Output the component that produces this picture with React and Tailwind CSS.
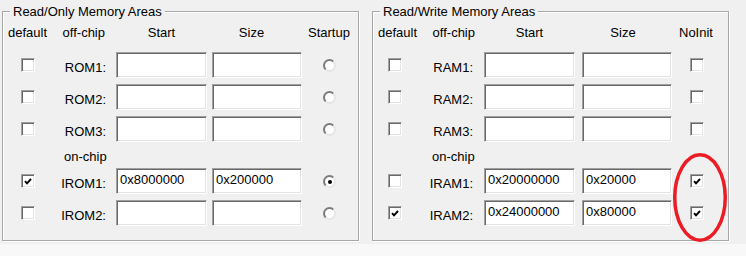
const romRows = [
  { label: "ROM1:" },
  { label: "ROM2:" },
  { label: "ROM3:" },
];
const iromRows = [
  { label: "IROM1:", start: "0x8000000", size: "0x200000", def: true, startup: true },
  { label: "IROM2:" },
];
const ramRows = [
  { label: "RAM1:" },
  { label: "RAM2:" },
  { label: "RAM3:" },
];
const iramRows = [
  { label: "IRAM1:", start: "0x20000000", size: "0x20000", noInit: true },
  { label: "IRAM2:", start: "0x24000000", size: "0x80000", def: true, noInit: true },
];

const Check = ({ checked }) => (
  <span className="mt-[6px] flex h-[14px] w-[14px] items-center justify-center border border-t-[#a0a0a0] border-l-[#a0a0a0] border-r-white border-b-white bg-white shadow-[inset_1px_1px_0_#696969,inset_-1px_-1px_0_#e3e3e3]">
    {checked && (
      <svg width="8" height="7" viewBox="0 0 8 7">
        <polyline points="1,3.2 3,5.4 7,1" fill="none" stroke="#000" strokeWidth="1.9" />
      </svg>
    )}
  </span>
);

const Radio = ({ on }) => (
  <span className="mt-[7px] flex h-[13px] w-[13px] items-center justify-center rounded-full border-2 border-t-[#7a7a7a] border-l-[#7a7a7a] border-r-[#e6e6e6] border-b-[#e6e6e6] bg-white">
    {on && <span className="h-[4px] w-[4px] rounded-full bg-black" />}
  </span>
);

const Edit = ({ value, className }) => (
  <div
    className={
      "h-[26px] border border-t-[#a0a0a0] border-l-[#a0a0a0] border-r-white border-b-white bg-white pl-[3px] pt-[3px] leading-[16px] shadow-[inset_1px_1px_0_#696969,inset_-1px_-1px_0_#e3e3e3] " +
      className
    }
  >
    {value}
  </div>
);

const Group = ({ title, className, children }) => (
  <div
    className={
      "mt-[11px] h-[230px] w-[357px] border border-[#a8a8a8] shadow-[inset_1px_1px_0_#fff,1px_1px_0_#fff] " +
      className
    }
  >
    <div className="-mt-[8px] ml-[7px] w-fit bg-[#f0f0f0] px-[3px]">{title}</div>
    {children}
  </div>
);

function RomRow({ row }) {
  return (
    <div className="flex h-[26px]">
      <div className="w-[49px] pl-[18px]">
        <Check checked={row.def} />
      </div>
      <div className="w-[54px] pt-[8px] text-right">{row.label}</div>
      <Edit value={row.start} className="ml-[10px] w-[91px]" />
      <Edit value={row.size} className="ml-[5px] w-[90px]" />
      <div className="ml-[21px]">
        <Radio on={row.startup} />
      </div>
    </div>
  );
}

function RamRow({ row }) {
  return (
    <div className="flex h-[26px]">
      <div className="w-[49px] pl-[15px]">
        <Check checked={row.def} />
      </div>
      <div className="w-[51px] pt-[8px] text-right">{row.label}</div>
      <Edit value={row.start} className="ml-[11px] w-[91px]" />
      <Edit value={row.size} className="ml-[7px] w-[90px]" />
      <div className="ml-[18px]">
        <Check checked={row.noInit} />
      </div>
    </div>
  );
}

export default function App() {
  return (
    <div className="relative h-[256px] w-[746px] overflow-hidden bg-[#f0f0f0] font-['Liberation_Sans',Arial,sans-serif] text-[13px] leading-[15px] text-black">
      <div className="flex h-[244px]">
        <Group title="Read/Only Memory Areas" className="ml-[2px]">
          <div className="mt-[6px] flex h-[15px]">
            <div className="w-[49px] text-center">default</div>
            <div className="w-[53px] text-right">off-chip</div>
            <div className="ml-[11px] w-[91px] text-center">Start</div>
            <div className="ml-[5px] w-[90px] pr-[11px] text-center">Size</div>
            <div className="ml-[6px]">Startup</div>
          </div>
          <div className="mt-[12px] flex flex-col gap-[6px]">
            {romRows.map((r) => (
              <RomRow key={r.label} row={r} />
            ))}
          </div>
          <div className="ml-[61px] mt-[7px] h-[15px]">on-chip</div>
          <div className="mt-[4px] flex flex-col gap-[6px]">
            {iromRows.map((r) => (
              <RomRow key={r.label} row={r} />
            ))}
          </div>
        </Group>

        <Group title="Read/Write Memory Areas" className="ml-[13px]">
          <div className="mt-[6px] flex h-[15px]">
            <div className="w-[49px] text-center">default</div>
            <div className="w-[53px] text-right">off-chip</div>
            <div className="ml-[9px] w-[91px] text-center">Start</div>
            <div className="ml-[7px] w-[90px] pr-[8px] text-center">Size</div>
            <div className="ml-[7px]">NoInit</div>
          </div>
          <div className="mt-[12px] flex flex-col gap-[6px]">
            {ramRows.map((r) => (
              <RamRow key={r.label} row={r} />
            ))}
          </div>
          <div className="ml-[59px] mt-[7px] h-[15px]">on-chip</div>
          <div className="mt-[4px] flex flex-col gap-[6px]">
            {iramRows.map((r) => (
              <RamRow key={r.label} row={r} />
            ))}
          </div>
        </Group>
      </div>
      <div className="h-[12px] bg-[#f8f8f8]" />

      <svg className="absolute left-[672px] top-[152px]" width="58" height="92" viewBox="0 0 58 92">
        <ellipse cx="28" cy="45.5" rx="25.25" ry="42.75" fill="none" stroke="#ec1c24" strokeWidth="3.5" />
      </svg>
    </div>
  );
}
